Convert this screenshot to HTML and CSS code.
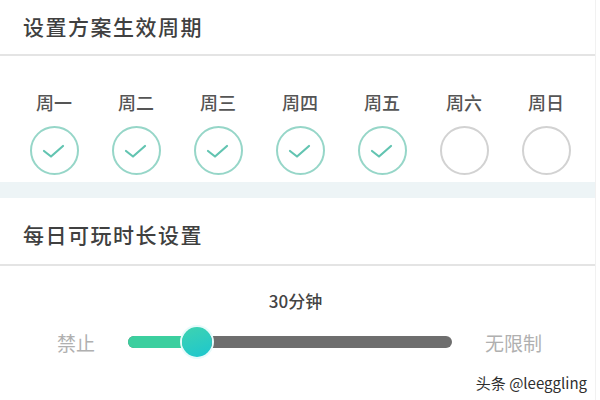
FILE: index.html
```html
<!DOCTYPE html>
<html lang="zh">
<head>
  <meta charset="UTF-8">
  <title>方案设置</title>
  <link rel="stylesheet" href="styles.css">
</head>
<body>
  <div class="page">
    <h2 class="section-title">设置方案生效周期</h2>

    <div class="days">
      <div class="day on"><span>周一</span><i class="check"></i></div>
      <div class="day on"><span>周二</span><i class="check"></i></div>
      <div class="day on"><span>周三</span><i class="check"></i></div>
      <div class="day on"><span>周四</span><i class="check"></i></div>
      <div class="day on"><span>周五</span><i class="check"></i></div>
      <div class="day"><span>周六</span><i class="check"></i></div>
      <div class="day"><span>周日</span><i class="check"></i></div>
    </div>

    <div class="band"></div>

    <h2 class="section-title second">每日可玩时长设置</h2>

    <div class="value">30分钟</div>

    <div class="slider-row">
      <span class="end-label left">禁止</span>
      <div class="track">
        <div class="fill"></div>
        <div class="thumb"></div>
      </div>
      <span class="end-label right">无限制</span>
    </div>

    <div class="mark">头条 @leeggling</div>
  </div>

  <script>
    // draw the tick in every selected day
    const tick = '<svg width="26" height="18" viewBox="0 0 26 18"><path d="M3 9 L10 14.5 L22 4" fill="none" stroke="#62c4b1" stroke-width="2.2" stroke-linecap="round" stroke-linejoin="round"/></svg>';
    document.querySelectorAll('.day.on .check').forEach(el => {
      el.innerHTML = tick;
    });
  </script>
</body>
</html>
```

FILE: styles.css
```css
body {
  margin: 0;
  background: #ffffff;
  font-family: "Noto Sans CJK SC", "Noto Sans", sans-serif;
  color: #3a3a3a;
}

.page {
  width: 595px;
  height: 400px;
  border-right: 1px solid #f1f1f1;
}

.section-title {
  margin: 0;
  padding: 14px 0 16px 23px;
  font-size: 21px;
  font-weight: 500;
  line-height: 24px;
  letter-spacing: 1.5px;
  color: #404040;
  border-bottom: 2px solid #e4e4e4;
}

.section-title.second {
  padding-top: 24px;
  padding-bottom: 18px;
}

.days {
  display: grid;
  grid-template-columns: repeat(7, 82px);
  padding: 34px 13px 7px;
}

.day {
  display: flex;
  flex-direction: column;
  align-items: center;
  gap: 12px;
}

.day span {
  font-size: 18px;
  font-weight: 500;
  line-height: 24px;
  color: #555;
}

.check {
  width: 45px;
  height: 45px;
  border-radius: 50%;
  border: 2px solid #d2d2d2;
  display: flex;
  align-items: center;
  justify-content: center;
}

.day.on .check {
  border-color: #96d6c8;
}

.band {
  height: 16px;
  background: #edf4f6;
}

.value {
  margin-top: 24px;
  text-align: center;
  font-size: 17px;
  font-weight: 500;
  line-height: 22px;
  color: #444;
  padding-right: 4px;
}

.slider-row {
  display: flex;
  align-items: center;
  margin-top: 15px;
  padding-left: 57px;
  height: 30px;
}

.end-label {
  font-size: 19px;
  color: #b0b0b0;
}

.end-label.left {
  width: 71px;
}

.end-label.right {
  margin-left: 33px;
}

.track {
  position: relative;
  width: 324px;
  height: 12px;
  border-radius: 6px;
  background: #6e6e6e;
}

.fill {
  width: 72px;
  height: 12px;
  border-radius: 6px;
  background: #3ccf9f;
}

.thumb {
  position: absolute;
  left: 54px;
  top: -9px;
  width: 30px;
  height: 30px;
  border-radius: 50%;
  background: linear-gradient(160deg, #3fd3b0, #1cc6cf);
  box-shadow: 0 0 0 2px #e8fbfb;
}

.mark {
  margin-top: 16px;
  text-align: right;
  padding-right: 8px;
  font-size: 15px;
  line-height: 20px;
  color: #2e2e2e;
}
```
